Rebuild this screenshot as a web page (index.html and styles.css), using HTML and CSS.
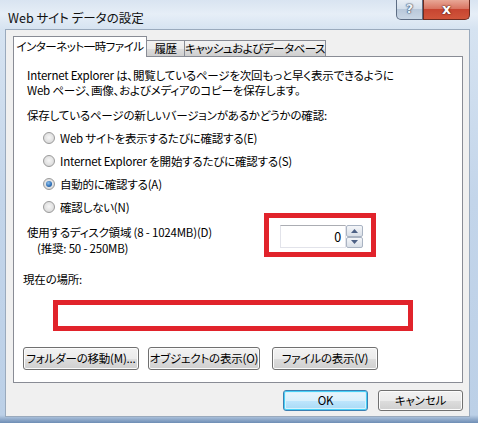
FILE: index.html
```html
<!DOCTYPE html>
<html lang="ja">
<head>
<meta charset="utf-8">
<title>Web サイト データの設定</title>
<link rel="stylesheet" href="styles.css">
</head>
<body>
<div class="window">
  <div class="titlebar">
    <div class="title">Web サイト データの設定</div>
    <div class="controls">
      <div class="cbtn help">?</div>
      <div class="cbtn close">x</div>
    </div>
  </div>
  <div class="client">
    <div class="tabs">
      <div class="tab active">インターネット一時ファイル</div>
      <div class="tab t2">履歴</div>
      <div class="tab t3">キャッシュおよびデータベース</div>
    </div>
    <div class="panel">
      <p class="txt intro">Internet Explorer は、閲覧しているページを次回もっと早く表示できるように<br>Web ページ、画像、およびメディアのコピーを保存します。</p>
      <p class="txt check">保存しているページの新しいバージョンがあるかどうかの確認:</p>
      <div class="radios">
        <div class="radio-row"><span class="radio"></span>Web サイトを表示するたびに確認する(E)</div>
        <div class="radio-row"><span class="radio"></span>Internet Explorer を開始するたびに確認する(S)</div>
        <div class="radio-row"><span class="radio checked"></span>自動的に確認する(A)</div>
        <div class="radio-row"><span class="radio"></span>確認しない(N)</div>
      </div>
      <div class="disk-row">
        <div class="txt disk-label">使用するディスク領域 (8 - 1024MB)(D)<br><span class="indent">(推奨: 50 - 250MB)</span></div>
        <div class="redbox spin-wrap">
          <div class="spin">
            <div class="spin-field">0</div>
            <div class="spin-btns">
              <div class="sbtn up"><svg width="7" height="4" viewBox="0 0 7 4"><path d="M0 4 L3.5 0 L7 4 Z" fill="#4d6185"/></svg></div>
              <div class="sbtn down"><svg width="7" height="4" viewBox="0 0 7 4"><path d="M0 0 L3.5 4 L7 0 Z" fill="#4d6185"/></svg></div>
            </div>
          </div>
        </div>
      </div>
      <p class="loc">現在の場所:</p>
      <div class="redbox path"></div>
      <div class="btn-row">
        <div class="btn b1">フォルダーの移動(M)...</div>
        <div class="btn b2">オブジェクトの表示(O)</div>
        <div class="btn b3">ファイルの表示(V)</div>
      </div>
    </div>
    <div class="dlg-btns">
      <div class="btn default ok">OK</div>
      <div class="btn cancel">キャンセル</div>
    </div>
  </div>
</div>
</body>
</html>
```

FILE: styles.css
```css
* { box-sizing: border-box; }
html, body { margin: 0; padding: 0; }
body {
  width: 478px;
  height: 423px;
  overflow: hidden;
  font-family: "Noto Sans CJK JP", sans-serif;
  font-size: 11.5px;
  letter-spacing: -0.2px;
  font-feature-settings: "palt";
  color: #000;
  white-space: nowrap;
}
.window {
  width: 478px;
  height: 423px;
  padding: 0 8px 6px 5px;
  background: linear-gradient(180deg, #d9e4f1 0px, #e6eef7 14px, #d6e3f1 29px, #c3d5ea 200px, #bcd0e7 415px, #6e8db4 423px);
}
.titlebar {
  height: 29px;
  display: flex;
  justify-content: space-between;
  align-items: flex-start;
}
.title {
  padding: 10px 0 0 3px;
  line-height: 16px;
  font-size: 12.5px;
  letter-spacing: 0;
  color: #111;
}
.controls { display: flex; }
.cbtn {
  height: 20px;
  border: 1px solid #5d6d84;
  border-top: none;
  text-align: center;
  font-family: "DejaVu Sans", sans-serif;
  font-weight: bold;
  color: #fff;
  line-height: 18px;
}
.help {
  width: 27px;
  font-size: 13px;
  border-bottom-left-radius: 5px;
  background: linear-gradient(180deg, #e8eef5 0%, #d4dfeb 45%, #b9c8da 50%, #c9d6e5 100%);
  color: #eef3f9;
  text-shadow: 0 0 1px #3d4f68, 0 0 1px #3d4f68, 0 0 2px #3d4f68;
}
.close {
  width: 47px;
  font-size: 14px;
  border-color: #6e2b20;
  border-bottom-right-radius: 5px;
  background: linear-gradient(180deg, #e8a796 0%, #d97562 45%, #c74531 50%, #d1553b 100%);
  text-shadow: 0 0 1px #4a1810, 0 0 2px #4a1810;
}
.client {
  height: 388px;
  background: #f0f0f0;
  border: 1px solid #9aaabd;
  padding: 7px 6px 0 7px;
}
.tabs {
  display: flex;
  align-items: flex-end;
  height: 19px;
}
.tab {
  height: 16px;
  border: 1px solid #898c95;
  border-bottom: none;
  background: linear-gradient(180deg, #f2f2f2 0%, #ebebeb 50%, #dddddd 51%, #cfcfcf 100%);
  line-height: 15px;
  text-align: center;
  margin-left: -1px;
  letter-spacing: -0.5px;
}
.tab.active {
  position: relative;
  z-index: 1;
  height: 21px;
  margin-bottom: -1px;
  margin-left: 0;
  width: 134px;
  background: #fff;
  padding-top: 2px;
}
.t2 { width: 39px; }
.t3 { width: 142px; }
.panel {
  background: #fff;
  border: 1px solid #898c95;
  height: 327px;
  padding: 11px 9px 0 9px;
}
.txt { padding-left: 4px; }
p { margin: 0; }
.intro { line-height: 15px; }
.check { margin-top: 10px; line-height: 15px; }
.radios { margin-top: 3px; }
.radio-row {
  height: 23px;
  display: flex;
  align-items: center;
  padding-left: 20px;
}
.radio {
  width: 12px;
  height: 12px;
  border-radius: 50%;
  border: 1px solid #9a9a9a;
  background: radial-gradient(circle at 50% 45%, #f6f6f6 0%, #e2e2e2 55%, #cfcfcf 100%);
  margin-right: 5px;
  display: flex;
  align-items: center;
  justify-content: center;
}
.radio.checked::after {
  content: "";
  width: 6px;
  height: 6px;
  border-radius: 50%;
  background: radial-gradient(circle at 40% 35%, #8fc1ec 0%, #2c6db5 60%, #1c4d8c 100%);
}
.disk-row {
  display: flex;
  align-items: flex-start;
}
.disk-label {
  margin-top: 6px;
  line-height: 16px;
  width: 241px;
}
.indent { padding-left: 10px; }
.redbox { border: 5px solid #e1232b; background: #fff; }
.spin-wrap {
  margin-top: -5px;
  width: 112px;
  height: 44px;
  padding: 7px 0 0 11px;
}
.spin { display: flex; }
.spin-field {
  width: 66px;
  height: 23px;
  border: 1px solid #e2e3ea;
  border-top-color: #abadb3;
  text-align: right;
  padding-right: 4px;
  line-height: 21px;
  font-size: 12.5px;
}
.spin-btns {
  width: 17px;
  height: 23px;
  display: flex;
  flex-direction: column;
}
.sbtn {
  height: 11.5px;
  border: 1px solid #a9b3c2;
  border-radius: 2px;
  background: linear-gradient(180deg, #f4f6f9 0%, #e6eaf0 50%, #d9dfe7 100%);
  display: flex;
  align-items: center;
  justify-content: center;
}
.loc { margin-top: 14px; line-height: 16px; }
.path {
  margin: 13px 0 0 30px;
  width: 360px;
  height: 31px;
}
.btn-row {
  display: flex;
  margin-top: 16px;
}
.btn {
  height: 23px;
  border: 1px solid #707070;
  border-radius: 3px;
  background: linear-gradient(180deg, #f2f2f2 0%, #ebebeb 50%, #dddddd 51%, #cfcfcf 100%);
  box-shadow: inset 0 0 0 1px #fcfcfc;
  text-align: center;
  line-height: 21px;
}
.b1 { width: 116px; }
.b2 { width: 112px; margin-left: 9px; }
.b3 { width: 106px; margin-left: 12px; }
.dlg-btns {
  display: flex;
  justify-content: flex-end;
  margin-top: 7px;
}
.dlg-btns .btn { width: 85px; height: 21px; line-height: 19px; }
.ok {
  border-color: #3c7fb1;
  box-shadow: inset 0 0 0 1px #48d0f7, inset 0 0 0 2px #d6f2fb;
  background: linear-gradient(180deg, #eaf6fd 0%, #d9f0fc 50%, #bee6fd 51%, #a7d9f5 100%);
}
.cancel { margin-left: 10px; }
```
